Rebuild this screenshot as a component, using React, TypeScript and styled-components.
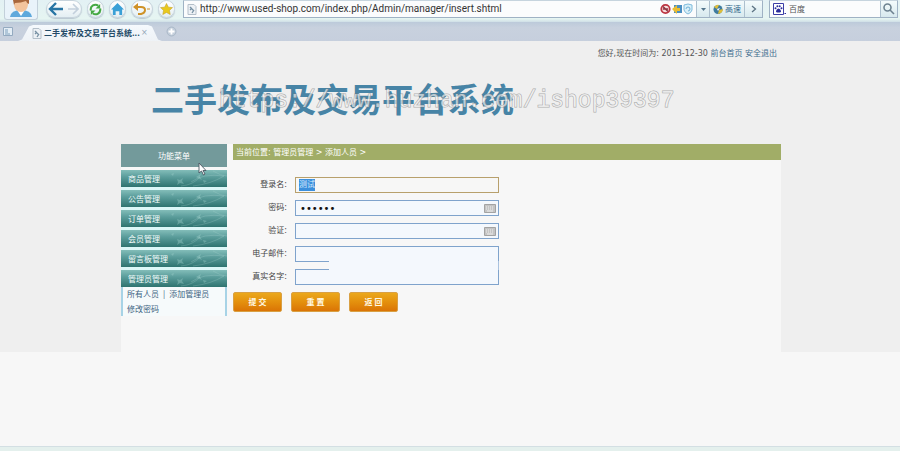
import React, { ReactNode } from 'react';
import styled, { createGlobalStyle } from 'styled-components';

const cjk = '"Noto Sans CJK SC", sans-serif';

const GlobalStyle = createGlobalStyle`
  * { box-sizing: border-box; }
  html { background: #f7f7f7; }
  body { margin: 0; font: 8px/12px "DejaVu Sans", ${cjk}; color: #555; }
  button, input { font: inherit; }
  a { color: inherit; text-decoration: none; }
`;

const Window = styled.div`
  display: flex;
  flex-direction: column;
  min-height: 100vh;
  overflow: hidden;
`;

const Toolbar = styled.header`
  display: flex;
  align-items: flex-start;
  height: 22px;
  padding: 0 2px 0 4px;
  background: linear-gradient(#e3f1f4, #e6f5f2 85%, #cfdfe6);
`;

const Avatar = styled.div`
  width: 34px;
  height: 20px;
  margin-right: 8px;
  border: 1px solid #c3d0da;
  border-top: 0;
  border-radius: 0 0 3px 3px;
  background: #e9f3fa;
  svg { display: block; margin: 0 auto; }
`;

const NavButtons = styled.nav`
  display: flex;
  gap: 5px;
  width: 137px;
`;

const NavButton = styled.button<{ $wide?: boolean }>`
  display: flex;
  align-items: center;
  justify-content: center;
  width: ${p => (p.$wide ? 22 : 17)}px;
  height: 18px;
  padding: 0;
  border: 1px solid #c6d3dc;
  border-radius: 9px;
  background: linear-gradient(#fff, #e4eff3);
  box-shadow: 0 1px 1px #b9c7d1;
  svg { flex: none; }
`;

const BackForward = styled.div`
  display: flex;
  width: 36px;
  height: 18px;
  border: 1px solid #c6d3dc;
  border-radius: 9px;
  background: linear-gradient(#fff, #e4eff3);
  box-shadow: 0 1px 1px #b9c7d1;
`;

const PlainButton = styled.button`
  display: flex;
  align-items: center;
  justify-content: center;
  flex: 1;
  padding: 0;
  border: 0;
  background: none;
  svg { flex: none; }
`;

const AddressBar = styled.div`
  display: flex;
  flex: 1;
  align-items: center;
  height: 18px;
  margin-right: 6px;
  border: 1px solid #9fb2c4;
  border-top-color: #c6d4de;
  background: #fbfcfd;
  > svg { flex: none; margin-left: 3px; }
`;

const UrlInput = styled.input`
  flex: 1;
  min-width: 0;
  height: 16px;
  padding: 0 0 0 3px;
  border: 0;
  outline: 0;
  background: transparent;
  color: #333;
  font: 10px/16px Roboto, sans-serif;
`;

const BarIcons = styled.span`
  display: flex;
  gap: 1px;
  margin-right: 2px;
`;

const BarButton = styled.button<{ $width: number }>`
  display: flex;
  align-items: center;
  justify-content: center;
  gap: 2px;
  width: ${p => p.$width}px;
  height: 16px;
  padding: 0;
  border: 0;
  border-left: 1px solid #adc0ce;
  background: linear-gradient(#f4fbfc, #d7e9ee);
  color: #34688c;
  font: 8px/12px ${cjk};
`;

const SearchBox = styled.form`
  display: flex;
  align-items: center;
  width: 129px;
  height: 18px;
  border: 1px solid #9fb2c4;
  border-top-color: #c6d4de;
  background: #fbfcfd;
  > svg { flex: none; margin-left: 3px; }
`;

const SearchInput = styled.input`
  flex: 1;
  min-width: 0;
  height: 16px;
  padding: 0 3px;
  border: 0;
  outline: 0;
  background: transparent;
  &::placeholder { color: #555; opacity: 1; }
`;

const TabStrip = styled.div`
  display: flex;
  align-items: center;
  height: 19px;
  padding-left: 3px;
  background: linear-gradient(#bccada, #c8d1de 30%, #c6cfdd);
`;

const Tab = styled.div`
  display: flex;
  align-items: center;
  align-self: flex-end;
  width: 144px;
  height: 16px;
  margin: 0 4px 0 5px;
  padding-left: 14px;
  background: linear-gradient(#f5f9fd, #eef2f6);
  clip-path: polygon(0 100%, 4px 90%, 11px 10%, 15px 0, 130px 0, 134px 10%, 140px 90%, 144px 100%);
`;

const TabTitle = styled.span`
  width: 97px;
  margin-left: 2px;
  color: #234b68;
  font: bold 8px/12px ${cjk};
  white-space: nowrap;
`;

const TabClose = styled.button`
  padding: 0;
  border: 0;
  background: none;
  color: #94a6b8;
  line-height: 10px;
`;

const NewTab = styled.button`
  display: flex;
  padding: 0;
  border: 0;
  background: none;
`;

const Page = styled.div`
  min-height: 311px;
  padding-left: 2px;
  background: #efefef;
`;

const Container = styled.div`
  max-width: 660px;
  margin: 0 auto;
`;

const Greeting = styled.div`
  height: 34px;
  padding: 7px 4px 0 0;
  text-align: right;
  a { color: #3f6e8e; }
`;

const Banner = styled.div`
  position: relative;
  height: 69px;
  padding-left: 30px;
`;

const Title = styled.h1`
  margin: 0;
  color: #4784a6;
  font: bold 33px/46px ${cjk};
  white-space: nowrap;
`;

const Watermark = styled.span`
  position: absolute;
  top: 12px;
  left: 98px;
  color: rgba(255, 255, 255, 0.6);
  -webkit-text-stroke: 1px rgba(120, 120, 120, 0.6);
  paint-order: stroke fill;
  font: 23px/28px "Liberation Mono", monospace;
  white-space: nowrap;
`;

const Body = styled.div`
  display: flex;
  align-items: flex-start;
  gap: 6px;
  min-height: 208px;
  background: #f7f7f7;
`;

const Sidebar = styled.aside`
  position: relative;
  flex: none;
  width: 106px;
  font-family: ${cjk};
`;

const MenuHeading = styled.h2`
  margin: 0 0 3px;
  background: #739a9b;
  color: #fff;
  font: 8px/23px ${cjk};
  text-align: center;
`;

const Menu = styled.ul`
  display: flex;
  flex-direction: column;
  gap: 3px;
  margin: 0;
  padding: 0;
  background: #dcf7f7;
  list-style: none;
`;

const MenuLink = styled.a`
  display: flex;
  justify-content: space-between;
  height: 17px;
  padding-left: 7px;
  background: linear-gradient(#83bdb9, #5b9d9b 40%, #2f7470);
  color: #f2fbfa;
  line-height: 17px;
  white-space: nowrap;
`;

const SubMenu = styled.div`
  display: flex;
  flex-wrap: wrap;
  gap: 3px 4px;
  padding: 1px 0 1px 4px;
  border: solid #a7d3e6;
  border-width: 0 2px;
  background: #f6fafb;
  color: #3c6482;
`;

const Pointer = styled.svg`
  position: absolute;
  top: 18px;
  left: 77px;
`;

const Main = styled.main`
  flex: 1;
  min-width: 0;
`;

const Breadcrumb = styled.div`
  height: 16px;
  margin-bottom: 17px;
  padding-left: 3px;
  background: #a1ad67;
  color: #fff;
  line-height: 18px;
`;

const Form = styled.form`
  display: flex;
  flex-direction: column;
  gap: 7px;
`;

const Row = styled.div`
  display: flex;
  align-items: center;
`;

const Label = styled.label`
  width: 54px;
  margin-right: 8px;
  color: #444;
  line-height: 16px;
  text-align: right;
`;

const FieldBox = styled.div`
  position: relative;
  display: flex;
  width: 204px;
`;

const Field = styled.input<{ $active?: boolean }>`
  flex: 1;
  min-width: 0;
  height: 16px;
  padding: 0 4px;
  border: 1px solid ${p => (p.$active ? '#b8a06c' : '#7fa3cc')};
  outline: 0;
  background: ${p => (p.$active ? '#f7f7f6' : '#f4f8fd')};
  color: #111;
  &[type='password'] { font-size: 10px; }
`;

const Selected = styled.span`
  position: absolute;
  top: 2px;
  left: 4px;
  height: 12px;
  background: #3c8fdc;
  color: #d8ecfc;
  pointer-events: none;
`;

const KeyboardIcon = styled.svg`
  position: absolute;
  top: 4px;
  right: 3px;
`;

const Fade = styled.span`
  position: absolute;
  z-index: 1;
  top: 15px;
  left: 34px;
  right: 0;
  height: 9px;
  border-right: 1px solid #a9c2df;
  background: #f4f8fd;
  pointer-events: none;
`;

const Actions = styled.div`
  display: flex;
  gap: 9px;
`;

const ActionButton = styled.button`
  width: 49px;
  height: 20px;
  padding: 0;
  border: 1px solid #d9a044;
  border-radius: 2px;
  background: linear-gradient(#eba81c, #e4900d 50%, #da7405);
  color: #fff8e4;
  font: bold 8px/18px ${cjk};
`;

const StatusLine = styled.footer`
  height: 5px;
  margin-top: auto;
  border-top: 1px solid #d3dfe3;
  background: #e4f0ed;
`;

const PageIcon = () => (
  <svg width="10" height="11" viewBox="0 0 10 11">
    <path d="M1 .5h6l2 2v8H1z" fill="#edf1f5" stroke="#b4bfc9" />
    <path d="M3 3l4 4M3 6l2-2M5 9l2-3" stroke="#7690a3" strokeWidth="1.3" />
  </svg>
);

const Leaves = () => (
  <svg width="58" height="17" viewBox="6 0 58 17" fill="none">
    <g stroke="#b9dedb" strokeOpacity=".22">
      <path d="M28 12q12-9 33-6M30 16q18-2 31-10M50 1q8 5 14 5M18 16q12-1 19-9" />
    </g>
    <g fill="#a9d6d1" fillOpacity=".35">
      <path d="M14 9l3 1 3-2-1 3 2 3-4-1-3 2 1-3zM33 7l5-3-1 3 2 3zM8 4l3-1-1 3zM40 10l4 1-3 2z" />
    </g>
  </svg>
);

const Keyboard = () => (
  <KeyboardIcon width="12" height="9" viewBox="0 0 12 9" aria-hidden="true">
    <path d="M.5.5h11v8H.5z" fill="#c4c4c4" stroke="#a3a3a3" />
    <path d="M2 3h8M2 5h8" stroke="#eee" strokeDasharray="1 1" />
    <path d="M3 7h6" stroke="#eee" />
  </KeyboardIcon>
);

const menuItems = ['商品管理', '公告管理', '订单管理', '会员管理', '留言板管理', '管理员管理'];

interface FormRowProps {
  id: string;
  label: string;
  type?: string;
  value?: string;
  active?: boolean;
  children?: ReactNode;
}

const FormRow = ({ id, label, type = 'text', value = '', active, children }: FormRowProps) => (
  <Row>
    <Label htmlFor={id}>{label}:</Label>
    <FieldBox>
      <Field id={id} type={type} defaultValue={value} $active={active} />
      {children}
    </FieldBox>
  </Row>
);

const BrowserBar = () => (
  <Toolbar>
    <Avatar>
      <svg width="28" height="17" viewBox="0 0 28 17">
        <path d="M3 17q1-7 11-7t11 7z" fill="#5fa9dc" />
        <path d="M10 10h8l-4 6z" fill="#fff" />
        <path d="M7 0h14v5q-1 7-7 7T7 5z" fill="#f3c49c" />
        <path d="M6 0h16v4q-2 0-3-3-5 2-11 2l-1 2z" fill="#a8673c" />
      </svg>
    </Avatar>
    <NavButtons aria-label="导航">
      <BackForward>
        <PlainButton aria-label="后退">
          <svg width="16" height="14" viewBox="0 0 16 14" fill="none" stroke="#2875a4" strokeWidth="2.4">
            <path d="M8 1L2 7l6 6M2 7h13" />
          </svg>
        </PlainButton>
        <PlainButton aria-label="前进">
          <svg width="12" height="12" viewBox="0 0 12 12" fill="none" stroke="#c3d0dc" strokeWidth="1.6">
            <path d="M6 1l5 5-5 5M11 6H1" />
          </svg>
        </PlainButton>
      </BackForward>
      <NavButton aria-label="刷新">
        <svg width="13" height="13" viewBox="0 0 14 14" fill="none" stroke="#45a943" strokeWidth="2.2">
          <path d="M2 8A5 5 0 0 1 10 3M12 6A5 5 0 0 1 4 11" />
          <path d="M12 1v5H7zM2 13V8h5z" fill="#45a943" stroke="none" />
        </svg>
      </NavButton>
      <NavButton aria-label="主页">
        <svg width="13" height="12" viewBox="0 0 14 13" fill="#3aa0d6">
          <path d="M7 0l7 7h-2v6H9V9H5v4H2V7H0z" />
        </svg>
      </NavButton>
      <NavButton $wide aria-label="撤销">
        <svg width="18" height="12" viewBox="0 0 18 12" fill="none" stroke="#cf9228" strokeWidth="2">
          <path d="M2 4h6q4 0 4 3t-4 4H5" />
          <path d="M5 0v8L0 4z" fill="#cf9228" stroke="none" />
          <path d="M14 6h3" strokeWidth="1" />
        </svg>
      </NavButton>
      <NavButton aria-label="收藏">
        <svg width="13" height="12" viewBox="0 0 14 13">
          <path d="M7 .5l2 4 4.500.5-3.300 3 .8 4.500-4-2.200-4 2.200.8-4.500L.5 5 5 4.500z" fill="#e9c91d" stroke="#c3a02b" strokeWidth=".6" />
        </svg>
      </NavButton>
    </NavButtons>
    <AddressBar>
      <PageIcon />
      <UrlInput aria-label="地址" defaultValue="http://www.used-shop.com/index.php/Admin/manager/insert.shtml" />
      <BarIcons>
        <svg width="34" height="12" viewBox="0 0 34 12" fill="none">
          <circle cx="5.500" cy="6" r="4.200" fill="#f6dede" stroke="#bd3542" strokeWidth="1.800" />
          <path d="M3 3.500l5 5M3 6h5" stroke="#8e3541" strokeWidth="1.500" />
          <path d="M14 2h8v8h-8z" fill="#4b8fc2" />
          <path d="M12 6l5-4v3h3v3h-3v3z" fill="#e9bd32" />
          <path d="M24 2l4-1 4 1v5q-1 3-4 4-3-1-4-4z" fill="#d8eff8" stroke="#7fbbdc" />
          <path d="M26 6a2 2 0 1 1 2 2" stroke="#6fb0d6" />
        </svg>
      </BarIcons>
      <BarButton $width={13} aria-label="更多">
        <svg width="5" height="3" viewBox="0 0 5 3"><path d="M0 0h5L2.500 3z" fill="#54758c" /></svg>
      </BarButton>
      <BarButton $width={35}>
        <svg width="10" height="11" viewBox="0 0 10 11">
          <circle cx="5" cy="5.500" r="4.500" fill="#3f7c9f" />
          <path d="M1 3q3-3 5-2L4 5zM5 10l1-4 4-1q0 4-5 5z" fill="#dfbe38" />
          <path d="M4 5l3-1-2 3z" fill="#fff" />
        </svg>
        高速
      </BarButton>
      <BarButton $width={18} aria-label="转到">
        <svg width="6" height="8" viewBox="0 0 6 8" fill="none" stroke="#5c7383" strokeWidth="1.300"><path d="M1 1l3.500 3L1 7" /></svg>
      </BarButton>
    </AddressBar>
    <SearchBox onSubmit={e => e.preventDefault()}>
      <svg width="13" height="12" viewBox="0 0 13 12">
        <path d="M.5.5h10v11H.5z" fill="#fff" stroke="#3b3da6" />
        <path d="M3 9q0-3 2.500-3.500Q8 6 8 9q-2.500 1-5 0z" fill="#2a2b9c" />
        <g fill="#2a2b9c">
          <circle cx="2.500" cy="5.200" r="1" /><circle cx="4.400" cy="3.200" r="1" />
          <circle cx="6.700" cy="3.200" r="1" /><circle cx="8.500" cy="5.200" r="1" />
          <path d="M11.500 10h1.500v1h-1.500z" />
        </g>
      </svg>
      <SearchInput aria-label="搜索" placeholder="百度" />
      <BarButton $width={17} aria-label="搜索按钮">
        <svg width="12" height="12" viewBox="0 0 12 12" fill="none" stroke="#6d8290" strokeWidth="1.600">
          <circle cx="4.500" cy="4.500" r="3.500" /><path d="M7 7l4 4" />
        </svg>
      </BarButton>
    </SearchBox>
  </Toolbar>
);

export default function App() {
  return (
    <Window>
      <GlobalStyle />
      <BrowserBar />
      <TabStrip>
        <svg width="10" height="9" viewBox="0 0 10 9">
          <path d="M.5.5h9v8h-9z" fill="#e3edf5" stroke="#94aac0" />
          <path d="M2 3h3M2 5h3M2 7h5" stroke="#7fa0bd" />
        </svg>
        <Tab>
          <PageIcon />
          <TabTitle>二手发布及交易平台系统...</TabTitle>
          <TabClose aria-label="关闭">×</TabClose>
        </Tab>
        <NewTab aria-label="新标签页">
          <svg width="11" height="11" viewBox="0 0 11 11" fill="none">
            <circle cx="5.500" cy="5.500" r="4.500" fill="#c3cedb" stroke="#aab8c8" />
            <path d="M5.500 2.500v6M2.500 5.500h6" stroke="#fff" strokeWidth="1.800" />
          </svg>
        </NewTab>
      </TabStrip>
      <Page>
        <Container>
          <Greeting>
            您好,现在时间为: 2013-12-30 <a href="#home">前台首页</a> <a href="#logout">安全退出</a>
          </Greeting>
          <Banner>
            <Title>二手发布及交易平台系统</Title>
            <Watermark>https://www.huzhan.com/ishop39397</Watermark>
          </Banner>
          <Body>
            <Sidebar>
              <MenuHeading>功能菜单</MenuHeading>
              <Menu>
                {menuItems.map(item => (
                  <li key={item}>
                    <MenuLink href="#menu">{item}<Leaves /></MenuLink>
                  </li>
                ))}
              </Menu>
              <SubMenu>
                <a href="#all">所有人员</a>
                <span>|</span>
                <a href="#add">添加管理员</a>
                <a href="#password">修改密码</a>
              </SubMenu>
              <Pointer width="9" height="14" viewBox="0 0 9 14" aria-hidden="true">
                <path d="M1 1v10l2.500-2 2 4 1.500-1-2-3.500H8z" fill="#fff" stroke="#4a5560" strokeWidth=".9" />
              </Pointer>
            </Sidebar>
            <Main>
              <Breadcrumb>当前位置: 管理员管理 &gt; 添加人员 &gt;</Breadcrumb>
              <Form onSubmit={e => e.preventDefault()}>
                <FormRow id="login" label="登录名" active>
                  <Selected>测试</Selected>
                </FormRow>
                <FormRow id="pass" label="密码" type="password" value="123456"><Keyboard /></FormRow>
                <FormRow id="confirm" label="验证" type="password"><Keyboard /></FormRow>
                <FormRow id="email" label="电子邮件"><Fade /></FormRow>
                <FormRow id="name" label="真实名字" />
                <Actions>
                  <ActionButton type="submit">提 交</ActionButton>
                  <ActionButton type="reset">重 置</ActionButton>
                  <ActionButton type="button">返 回</ActionButton>
                </Actions>
              </Form>
            </Main>
          </Body>
        </Container>
      </Page>
      <StatusLine />
    </Window>
  );
}
